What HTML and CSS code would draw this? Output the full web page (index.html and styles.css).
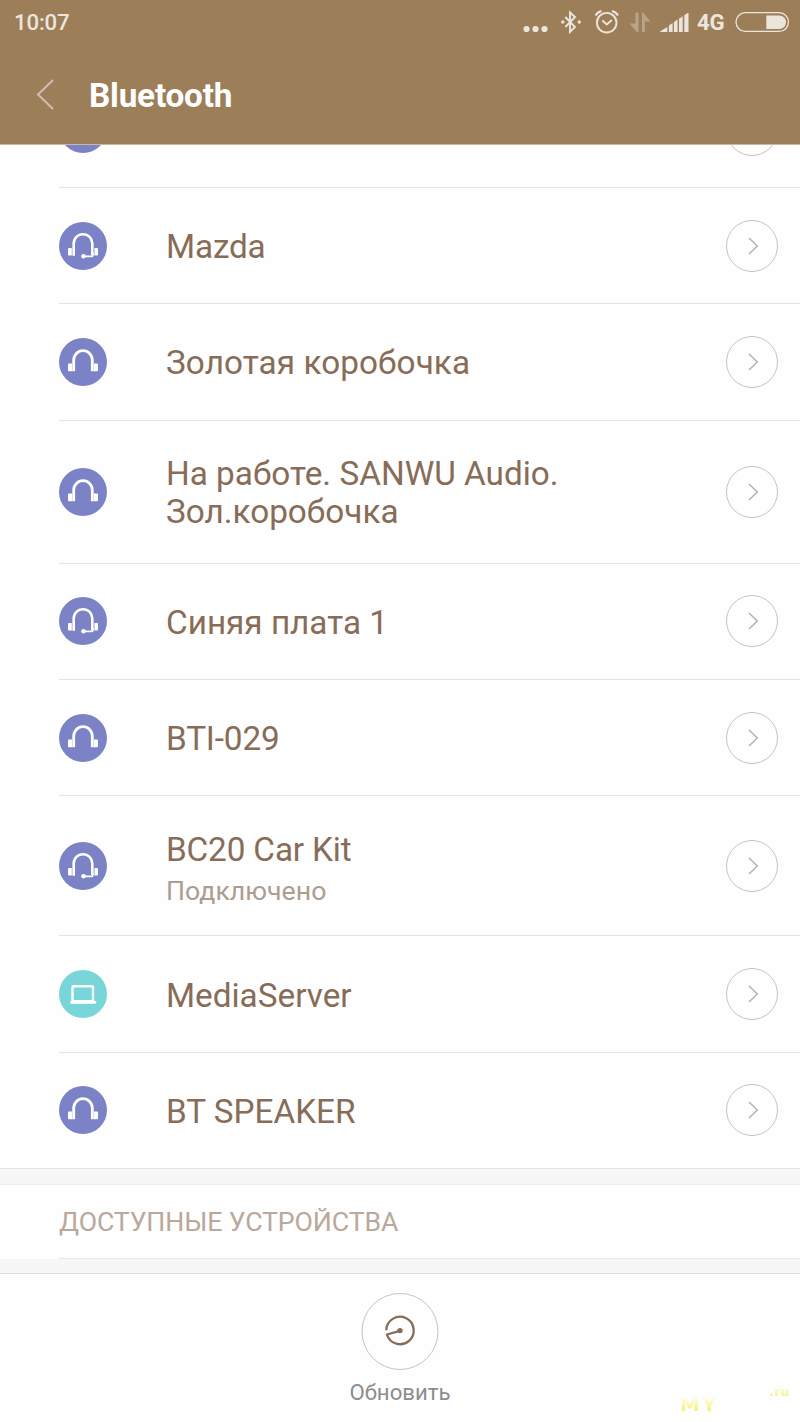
FILE: index.html
```html
<!DOCTYPE html>
<html lang="ru">
<head>
<meta charset="utf-8">
<title>Bluetooth</title>
<link rel="stylesheet" href="styles.css">
</head>
<body>
<svg class="defs" aria-hidden="true">
  <symbol id="phones" viewBox="0 0 48 48">
    <path d="M14.700 33.300V22a9.300 9.300 0 0 1 18.600 0v11.300" fill="none" stroke="#fff" stroke-width="2.800"/>
    <path d="M10 25.600h3.200v7.700H10a1 1 0 0 1-1-1v-5.700a1 1 0 0 1 1-1zM34.800 25.600H38a1 1 0 0 1 1 1v5.700a1 1 0 0 1-1 1h-3.200z" fill="#fff"/>
  </symbol>
  <symbol id="headset" viewBox="0 0 48 48">
    <path d="M14.700 33.700V21.500a9.300 9.300 0 0 1 18.600 0V33" fill="none" stroke="#fff" stroke-width="2.600"/>
    <path d="M33.700 31v2.400q0 1-1 1H24.500" fill="none" stroke="#fff" stroke-width="1.800"/>
    <circle cx="24.500" cy="34.200" r="2.300" fill="#fff"/>
    <path d="M10 26h2.800v7.500H10a1 1 0 0 1-1-1V27a1 1 0 0 1 1-1zM35.400 26H38a1 1 0 0 1 1 1v5.500a1 1 0 0 1-1 1h-2.600z" fill="#fff"/>
  </symbol>
  <symbol id="laptop" viewBox="0 0 48 48">
    <rect x="13.500" y="16.200" width="20.500" height="15" rx="1" fill="none" stroke="#fff" stroke-width="2.400"/>
    <rect x="11" y="30.700" width="26.200" height="3" rx="1.500" fill="#fff"/>
  </symbol>
  <symbol id="chevron" viewBox="0 0 52 52">
    <circle cx="26" cy="26" r="25.500" fill="none" stroke="#cdc2ba" stroke-width="1"/>
    <path d="M23 18l8.300 8-8.300 8" fill="none" stroke="#bdb0a7" stroke-width="1.500"/>
  </symbol>
</svg>
<div class="screen">
  <header class="header">
    <div class="status">
      <span class="clock">10:07</span>
      <svg class="status-icons" width="290" height="45" viewBox="0 0 290 45" fill="none" stroke="#ece5dc">
        <g fill="#ece5dc" stroke="none"><circle cx="16.500" cy="29" r="3.100"/><circle cx="25.500" cy="29" r="3.100"/><circle cx="34.500" cy="29" r="3.100"/></g>
        <path d="M55.300 17l9.700 10-5 5V12.500l5 4.500-9.700 10" stroke-width="1.900"/>
        <circle cx="52.800" cy="22" r="1.700" fill="#ece5dc" stroke="none"/><circle cx="69.300" cy="22" r="1.700" fill="#ece5dc" stroke="none"/>
        <circle cx="96.700" cy="22.700" r="9.800" stroke-width="1.900"/>
        <path d="M92.300 20.500l4.500 4 5-4.500" stroke-width="1.900"/>
        <path d="M85.500 15.500q2-3.500 6-4.500M108 15.500q-2-3.500-6-4.500" stroke-width="2.200"/>
        <path d="M125.500 12.500h3V32h-1.500l-7.500-8.500h6zM132 32h2.900V21.500h5.500L133 12.500h-1z" fill="#b9a488" stroke="none"/>
        <path d="M150.300 32v-.7l7-4.300v5zM158.900 32v-6.500l3.700-2.600V32zM163.900 32v-9.900l3.700-2.600V32zM169 32V18.700l3.700-2.500V32zM174.300 32V15.200l3.200-2.200h1v19z" fill="#ece5dc" stroke="none"/>
        <rect x="226" y="12.700" width="52.500" height="18.700" rx="9.300" stroke-width="1.300"/>
        <path d="M256.300 15.400h13a6.700 6.700 0 0 1 0 13.500h-13z" fill="#ece5dc" stroke="none"/>
        <text class="network" x="187" y="30.300">4G</text>
      </svg>
    </div>
    <div class="titlebar">
      <svg class="back" width="20" height="32" viewBox="0 0 20 32"><path d="M18 2L3 16.500 18 31" fill="none" stroke="#cdbfac" stroke-width="2"/></svg>
      <h1 class="title">Bluetooth</h1>
    </div>
  </header>
  <main class="list">
    <div class="row row-cut"><span class="badge"><svg><use href="#phones"/></svg></span><span class="name"></span><svg class="go"><use href="#chevron"/></svg></div>
    <div class="row"><span class="badge"><svg><use href="#headset"/></svg></span><span class="name name-tight">Mazda</span><svg class="go"><use href="#chevron"/></svg></div>
    <div class="row"><span class="badge"><svg><use href="#phones"/></svg></span><span class="name name-wide">Золотая коробочка</span><svg class="go"><use href="#chevron"/></svg></div>
    <div class="row row-two"><span class="badge"><svg><use href="#phones"/></svg></span><span class="name">На работе. SANWU Audio.<br>Зол.коробочка</span><svg class="go"><use href="#chevron"/></svg></div>
    <div class="row"><span class="badge"><svg><use href="#headset"/></svg></span><span class="name">Синяя плата 1</span><svg class="go"><use href="#chevron"/></svg></div>
    <div class="row"><span class="badge"><svg><use href="#phones"/></svg></span><span class="name name-tight">BTI-029</span><svg class="go"><use href="#chevron"/></svg></div>
    <div class="row row-sub"><span class="badge"><svg><use href="#headset"/></svg></span><span class="name name-tight">BC20 Car Kit<small class="state">Подключено</small></span><svg class="go"><use href="#chevron"/></svg></div>
    <div class="row"><span class="badge badge-pc"><svg><use href="#laptop"/></svg></span><span class="name">MediaServer</span><svg class="go"><use href="#chevron"/></svg></div>
    <div class="row row-last"><span class="badge"><svg><use href="#phones"/></svg></span><span class="name">BT SPEAKER</span><svg class="go"><use href="#chevron"/></svg></div>
  </main>
  <div class="gap"></div>
  <h2 class="section">ДОСТУПНЫЕ УСТРОЙСТВА</h2>
  <div class="gap gap-bottom"></div>
  <footer class="footer">
    <svg class="refresh" width="78" height="78" viewBox="0 0 78 78" fill="none">
      <circle cx="39" cy="38.500" r="38" stroke="#cdc2ba"/>
      <path d="M25.300 37.300A13.700 13.700 0 1 1 25.900 41.500L39 37.800" stroke="#876c58" stroke-width="2.300" stroke-linejoin="round"/>
      <circle cx="39" cy="37.600" r="2.700" fill="#876c58"/>
    </svg>
    <span class="refresh-label">Обновить</span>
    <span class="mark mark-my">MY</span>
    <span class="mark mark-ru">.ru</span>
  </footer>
</div>
</body>
</html>
```
FILE: styles.css
```css
* { box-sizing: border-box; }
body { margin: 0; background: #fefefe; font-family: Roboto, "Noto Sans", sans-serif; }
.defs { position: absolute; width: 0; height: 0; }
.screen { width: 800px; height: 1422px; display: flex; flex-direction: column; overflow: hidden; }
.header { height: 145px; flex: none; background: #9c7e59; border-bottom: 1px solid #c9b9a4; }
.status { height: 45px; display: flex; justify-content: space-between; padding-left: 14px; }
.clock { font-size: 22.2px; font-weight: 500; line-height: 45px; letter-spacing: -0.15px; color: #ece5dc; }
.network { font-size: 22.2px; font-weight: 700; letter-spacing: -0.2px; fill: #ece5dc; stroke: none; }
.titlebar { height: 99px; display: flex; align-items: center; padding: 2px 0 0 35px; gap: 34px; }
.back { margin-top: -3px; }
.title { margin: 0; font-size: 33.3px; font-weight: 700; letter-spacing: -0.2px; color: #fff; }
.list { flex: none; }
.row { height: 116.3px; margin-left: 59px; padding-right: 22px; display: flex; align-items: center; border-bottom: 1px solid #e3e3e3; }
.row-cut { height: 43px; overflow: hidden; align-items: flex-start; }
.row-cut .badge { margin-top: -40px; }
.row-cut .go { margin-top: -41px; }
.row-two { height: 143.2px; }
.row-sub { height: 140px; }
.row-last { height: 115.6px; border-bottom: 0; }
.badge { width: 48px; height: 48px; flex: none; border-radius: 50%; background: #7b83c6; }
.badge svg { display: block; width: 48px; height: 48px; }
.badge-pc { background: #78d5d8; }
.name { flex: 1; margin-left: 59px; padding-top: 3px; font-size: 33.3px; line-height: 38px; color: #876c58; }
.name-tight { letter-spacing: -0.15px; }
.name-wide { letter-spacing: 0.08px; }
.row-sub .name { padding-top: 6px; }
.state { display: block; font-size: 26.7px; line-height: 32px; margin-top: 6px; letter-spacing: 0; color: #ad9d91; }
.go { width: 52px; height: 52px; flex: none; }
.gap { height: 16.5px; flex: none; background: #f7f7f7; border-top: 1px solid #e3e3e3; border-bottom: 1px solid #ebebeb; }
.section { height: 74px; flex: none; margin: 0 0 0 59px; font-size: 26.7px; font-weight: 400; line-height: 75px; letter-spacing: -0.1px; color: #b9a89b; border-bottom: 1px solid #e6e6e6; }
.gap-bottom { height: 15.4px; border-top: 0; border-bottom-color: #dcdcdc; }
.footer { flex: 1; position: relative; display: flex; flex-direction: column; align-items: center; padding-top: 19px; }
.refresh-label { margin-top: 7px; font-size: 22.2px; line-height: 28px; color: #8d8d8d; }
.mark { position: absolute; font-family: "DejaVu Sans", sans-serif; font-weight: 700; color: transparent; background: linear-gradient(#fefee8 15%, #f5f06c 80%); background-clip: text; -webkit-background-clip: text; }
.mark-my { left: 680px; top: 121px; font-size: 18px; line-height: 20px; letter-spacing: 2px; transform: scaleX(1.1); transform-origin: left; }
.mark-ru { left: 769px; top: 110px; font-size: 13px; line-height: 16px; }
```
